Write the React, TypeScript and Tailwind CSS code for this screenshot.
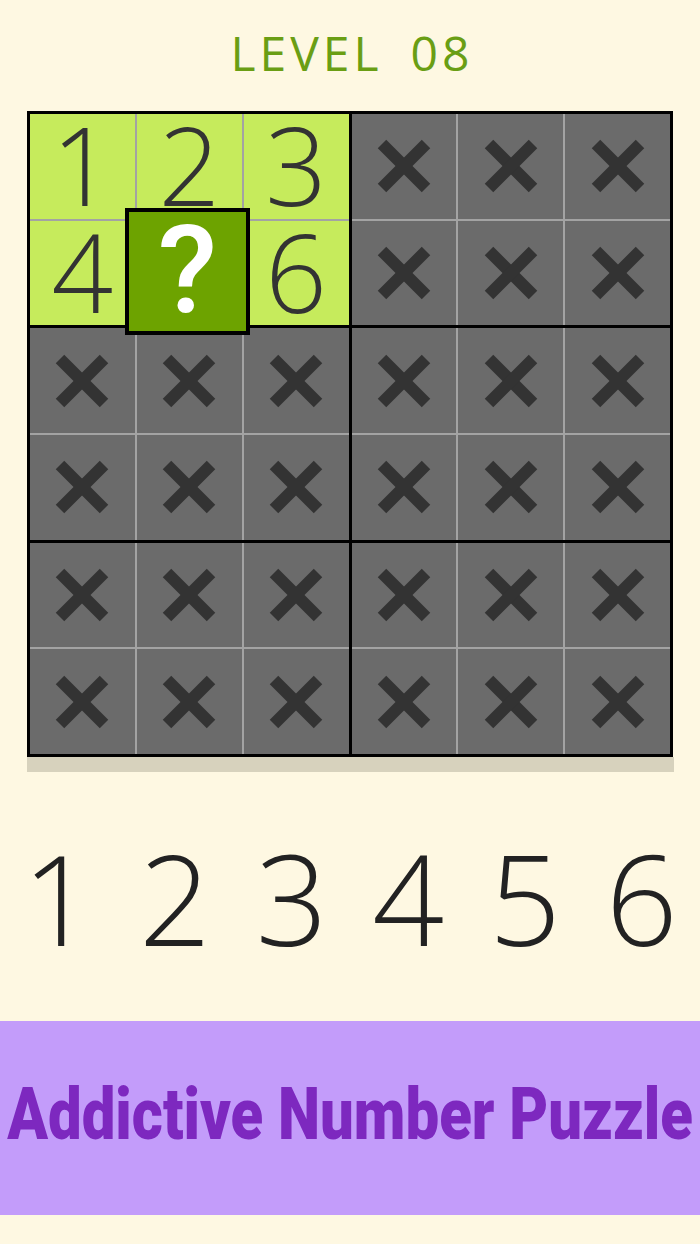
import React from "react";

const BG = "bg-[#fef8e2]";

function Cross() {
  return (
    <svg width="56" height="56" viewBox="0 0 56 56">
      <line x1="6" y1="6" x2="50" y2="50" stroke="#333333" strokeWidth="12" />
      <line x1="50" y1="6" x2="6" y2="50" stroke="#333333" strokeWidth="12" />
    </svg>
  );
}

function Cell({ value }: { value?: number }) {
  if (value !== undefined) {
    return (
      <div
        className="flex items-center justify-center bg-[#c6eb5c] text-[#333333] text-[108px] leading-[78px] font-light"
        style={{ fontFamily: '"Open Sans", sans-serif' }}
      >
        <span className="-mt-[2px]">{value}</span>
      </div>
    );
  }
  return (
    <div className="flex items-center justify-center bg-[#6b6b6b]">
      <Cross />
    </div>
  );
}

// block index 0 is the top-left one, holding the known numbers
function Block({ idx }: { idx: number }) {
  const known = [1, 2, 3, 4, 5, 6];
  return (
    <div className="grid grid-cols-3 grid-rows-2 gap-[2px] bg-[#a3a3a3]">
      {known.map((n) => (
        <Cell key={n} value={idx === 0 && n !== 5 ? n : undefined} />
      ))}
    </div>
  );
}

export default function App() {
  return (
    <div className={`w-[700px] h-[1244px] ${BG} flex flex-col`}>
      <div className="h-[111px] flex items-center justify-center">
        <h1
          className="flex gap-[28px] text-[48px] text-[#6a9e14] tracking-[4px] -mt-[6px] pl-[4px]"
          style={{ fontFamily: '"Open Sans", sans-serif' }}
        >
          <span>LEVEL</span>
          <span>08</span>
        </h1>
      </div>

      <div className="px-[27px]">
        <div className="relative">
          <div className="grid grid-cols-2 grid-rows-3 gap-[3px] bg-black p-[3px] w-[646px] h-[646px]">
            {[0, 1, 2, 3, 4, 5].map((i) => (
              <Block key={i} idx={i} />
            ))}
          </div>
          <div className="absolute left-[98px] top-[97px] w-[125px] h-[127px] border-[4px] border-black bg-[#6da300] flex items-center justify-center">
            <span
              className="text-white text-[122px] leading-[100px] font-medium -mt-[2px]"
              style={{ fontFamily: "Roboto, sans-serif" }}
            >
              ?
            </span>
          </div>
        </div>
        <div className="h-[15px] w-[647px] bg-[#d7d2bd]" />
      </div>

      <div
        className="h-[249px] grid grid-cols-6 items-center text-[126px] leading-none font-light text-[#222222]"
        style={{ fontFamily: '"Open Sans", sans-serif' }}
      >
        {[1, 2, 3, 4, 5, 6].map((n) => (
          <div key={n} className="text-center">
            {n}
          </div>
        ))}
      </div>

      <div className="h-[194px] bg-[#c39cfa] flex items-center justify-center overflow-hidden">
        <span
          className="inline-block whitespace-nowrap text-[73px] font-black text-[#7d28bf] scale-x-[0.82] leading-none -mt-[8px]"
          style={{ fontFamily: "Roboto, sans-serif" }}
        >
          Addictive Number Puzzle
        </span>
      </div>
    </div>
  );
}
